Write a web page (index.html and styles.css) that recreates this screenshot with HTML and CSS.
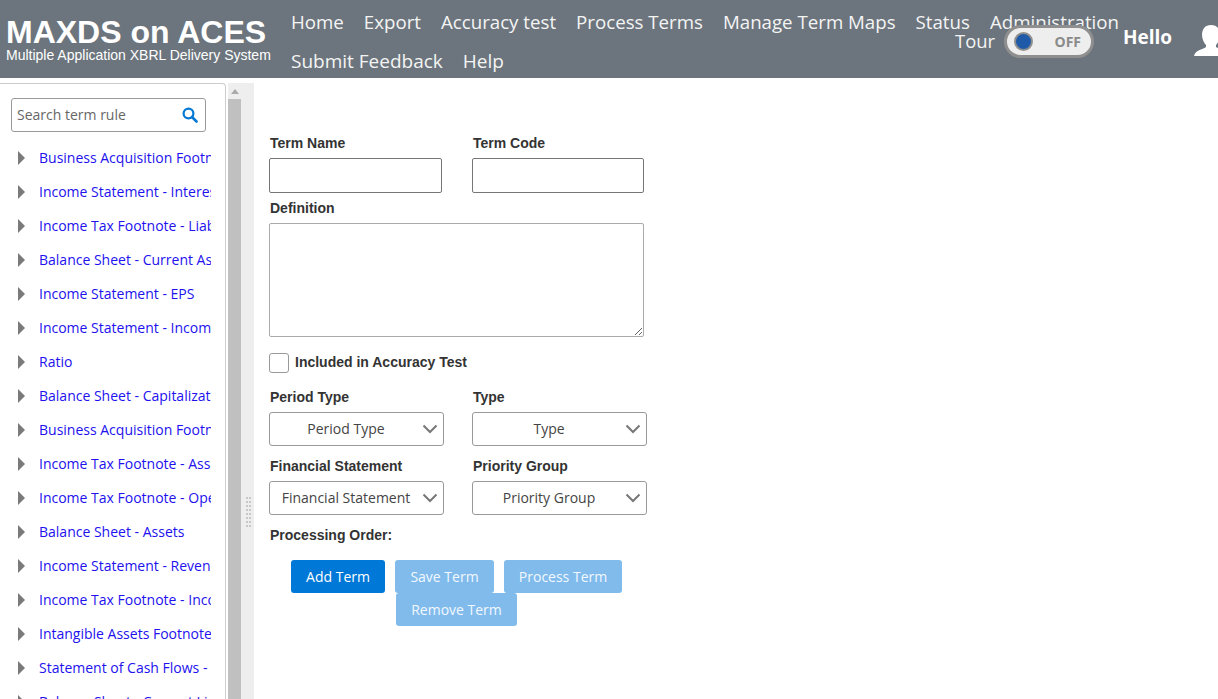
FILE: index.html
```html
<!DOCTYPE html>
<html lang="en">
<head>
  <meta charset="UTF-8">
  <title>MAXDS on ACES</title>
  <link rel="stylesheet" href="styles.css">
</head>
<body>
  <header class="topbar">
    <div class="brand">
      <div class="brand-name">MAXDS on ACES</div>
      <div class="brand-sub">Multiple Application XBRL Delivery System</div>
    </div>
    <nav class="nav">
      <a href="#">Home</a>
      <a href="#">Export</a>
      <a href="#">Accuracy test</a>
      <a href="#">Process Terms</a>
      <a href="#">Manage Term Maps</a>
      <a href="#">Status</a>
      <a href="#">Administration</a>
      <a href="#" class="nav-wide">Submit Feedback</a>
      <a href="#" class="nav-wide">Help</a>
    </nav>
    <!-- sits on top of the nav, it overlaps Administration -->
    <div class="tools">
      <span class="tour">Tour</span>
      <span class="toggle"><span class="knob"></span><span class="toggle-text">OFF</span></span>
      <span class="hello">Hello</span>
      <svg class="user-icon" width="36" height="32" viewBox="0 0 36 32">
        <path fill="#fff" d="M17 1c6 0 9 4 9 10 0 4-2 8-4 10v2c2 2 12 3 13 9H0c1-6 10-7 12-9v-2c-2-2-4-6-4-10C8 5 11 1 17 1z"/>
      </svg>
    </div>
  </header>

  <div class="layout">
    <aside class="sidebar">
      <div class="search">
        <input type="text" placeholder="Search term rule">
        <svg width="16" height="16" viewBox="0 0 16 16">
          <circle cx="6.5" cy="6.5" r="4.9" fill="none" stroke="#0078d4" stroke-width="2.2"/>
          <path d="M10 10l4.5 4.5" stroke="#0078d4" stroke-width="2.6" stroke-linecap="round"/>
        </svg>
      </div>
      <ul class="tree">
        <li><a href="#">Business Acquisition Footnote</a></li>
        <li><a href="#">Income Statement - Interest</a></li>
        <li><a href="#">Income Tax Footnote - Liabilities</a></li>
        <li><a href="#">Balance Sheet - Current Assets</a></li>
        <li><a href="#">Income Statement - EPS</a></li>
        <li><a href="#">Income Statement - Income</a></li>
        <li><a href="#">Ratio</a></li>
        <li><a href="#">Balance Sheet - Capitalization</a></li>
        <li><a href="#">Business Acquisition Footnote</a></li>
        <li><a href="#">Income Tax Footnote - Assets</a></li>
        <li><a href="#">Income Tax Footnote - Operating</a></li>
        <li><a href="#">Balance Sheet - Assets</a></li>
        <li><a href="#">Income Statement - Revenue</a></li>
        <li><a href="#">Income Tax Footnote - Income</a></li>
        <li><a href="#">Intangible Assets Footnote</a></li>
        <li><a href="#">Statement of Cash Flows - Other</a></li>
        <li><a href="#">Balance Sheet - Current Liabilities</a></li>
      </ul>
    </aside>

    <div class="splitter">
      <div class="scroll-track">
        <span class="scroll-up"></span>
        <div class="scroll-thumb"></div>
      </div>
      <div class="grip"></div>
    </div>

    <main class="editor">
      <div class="row">
        <div class="col">
          <label for="term-name">Term Name</label>
          <input type="text" id="term-name" class="field field-name">
        </div>
        <div class="col">
          <label for="term-code">Term Code</label>
          <input type="text" id="term-code" class="field field-code">
        </div>
      </div>

      <label for="definition" class="definition-label">Definition</label>
      <textarea id="definition" class="definition"></textarea>

      <div class="check-row">
        <span class="checkbox"></span>
        <label>Included in Accuracy Test</label>
      </div>

      <div class="row row-first-select">
        <div class="col">
          <label>Period Type</label>
          <div class="dropdown"><span>Period Type</span><svg width="16" height="10" viewBox="0 0 16 10"><path d="M1.5 1.5L8 8l6.5-6.5" fill="none" stroke="#777" stroke-width="2"/></svg></div>
        </div>
        <div class="col">
          <label>Type</label>
          <div class="dropdown"><span>Type</span><svg width="16" height="10" viewBox="0 0 16 10"><path d="M1.5 1.5L8 8l6.5-6.5" fill="none" stroke="#777" stroke-width="2"/></svg></div>
        </div>
      </div>

      <div class="row row-select">
        <div class="col">
          <label>Financial Statement</label>
          <div class="dropdown"><span>Financial Statement</span><svg width="16" height="10" viewBox="0 0 16 10"><path d="M1.5 1.5L8 8l6.5-6.5" fill="none" stroke="#777" stroke-width="2"/></svg></div>
        </div>
        <div class="col">
          <label>Priority Group</label>
          <div class="dropdown"><span>Priority Group</span><svg width="16" height="10" viewBox="0 0 16 10"><path d="M1.5 1.5L8 8l6.5-6.5" fill="none" stroke="#777" stroke-width="2"/></svg></div>
        </div>
      </div>

      <label class="order-label">Processing Order:</label>

      <div class="actions">
        <button class="btn btn-add">Add Term</button>
        <button class="btn btn-off btn-save">Save Term</button>
        <button class="btn btn-off btn-process">Process Term</button>
        <button class="btn btn-off btn-remove">Remove Term</button>
      </div>
    </main>
  </div>
</body>
</html>
```

FILE: styles.css
```css
html, body {
  margin: 0;
  height: 100%;
  overflow: hidden;
  background: #fff;
}
body {
  font-family: "Open Sans", sans-serif;
  font-size: 14px;
  color: #222;
}

/* top bar */
.topbar {
  position: relative;
  display: flex;
  height: 78px;
  background: #6c757d;
  overflow: hidden;
}
.brand {
  width: 281px;
  flex: none;
  padding: 16px 0 0 6px;
  box-sizing: border-box;
  font-family: "Liberation Sans", Arial, sans-serif;
  color: #fff;
}
.brand-name {
  font-size: 32px;
  font-weight: bold;
  line-height: 32px;
}
.brand-sub {
  font-size: 14px;
  line-height: 14px;
}
.nav {
  flex: 1;
  display: flex;
  flex-wrap: wrap;
  align-content: flex-start;
  row-gap: 1px;
  padding-top: 2px;
}
.nav a {
  padding: 0 10px;
  font-size: 18.7px;
  line-height: 39px;
  color: #f4f4f4;
  text-decoration: none;
}
.nav a.nav-wide {
  font-size: 19px;
}
.tools {
  position: absolute;
  left: 955px;
  top: 25px;
  display: flex;
  align-items: center;
  height: 33px;
  color: #f4f4f4;
}
.tour {
  margin-top: -2px;
  font-size: 18.4px;
  width: 49px;
}
.toggle {
  display: flex;
  align-items: center;
  justify-content: space-between;
  box-sizing: border-box;
  width: 90px;
  height: 33px;
  padding: 0 10px 0 7px;
  background: #eee;
  border: 3px solid #8f8f8f;
  border-radius: 17px;
}
.knob {
  width: 15px;
  height: 15px;
  background: #1f5aa8;
  border: 2px solid #8f8f8f;
  border-radius: 50%;
}
.toggle-text {
  font-size: 14px;
  font-weight: bold;
  color: #8a8a8a;
}
.hello {
  margin: -10px 0 0 29px;
  font-size: 19px;
  font-weight: bold;
  color: #fff;
}
.user-icon {
  margin: -3px 0 0 22px;
  flex: none;
}

/* page under the bar */
.layout {
  display: flex;
  height: 621px;
}
.sidebar {
  width: 226px;
  height: 616px;
  margin-top: 5px;
  flex: none;
  box-sizing: border-box;
  padding: 14px 14px 0 11px;
  border-top: 1px solid #ccc;
  border-right: 1px solid #ccc;
  border-top-right-radius: 4px;
  overflow: hidden;
}
.search {
  display: flex;
  align-items: center;
  box-sizing: border-box;
  width: 195px;
  height: 34px;
  padding: 0 7px 0 5px;
  border: 1px solid #999;
  border-radius: 3px;
}
.search input {
  flex: 1;
  min-width: 0;
  padding: 0 0 2px;
  border: 0;
  outline: 0;
  font: inherit;
}
.search input::placeholder {
  color: #666;
  opacity: 1;
}
.tree {
  margin: 9px 0 0;
  padding: 0;
  list-style: none;
}
.tree li {
  position: relative;
  height: 34px;
  line-height: 34px;
  padding-left: 28px;
  white-space: nowrap;
  overflow: hidden;
}
.tree li::before {
  content: "";
  position: absolute;
  left: 7px;
  top: 10px;
  border-left: 7px solid #7a7a7a;
  border-top: 7px solid transparent;
  border-bottom: 7px solid transparent;
}
.tree a {
  color: #2211ee;
  text-decoration: none;
}

.splitter {
  display: flex;
  width: 28px;
  margin-top: 5px;
  flex: none;
  background: #eee;
  border-left: 2px solid #fff;
  box-sizing: border-box;
}
.scroll-track {
  width: 13px;
  flex: none;
}
.scroll-up {
  display: block;
  width: 0;
  margin: 6px auto 5px;
  border-left: 4px solid transparent;
  border-right: 4px solid transparent;
  border-bottom: 5px solid #aaa;
}
.scroll-thumb {
  height: 600px;
  background: #c0c0c0;
}
.grip {
  width: 5px;
  height: 32px;
  margin: 414px 0 0 5px;
  background-image: radial-gradient(circle at 1px 1px, #c8c8c8 1.2px, transparent 1.3px);
  background-size: 3px 4px;
}

/* form */
.editor {
  flex: 1;
  padding: 57px 0 0 15px;
}
label {
  display: block;
  padding-left: 1px;
  font-family: "Liberation Sans", Arial, sans-serif;
  font-size: 14px;
  font-weight: bold;
  line-height: 16px;
  color: #333;
}
.row {
  display: flex;
}
.col {
  width: 203px;
}
.field {
  display: block;
  box-sizing: border-box;
  height: 35px;
  margin-top: 7px;
  border: 1px solid #767676;
  border-radius: 2px;
}
.field-name {
  width: 173px;
}
.field-code {
  width: 172px;
}
.definition-label {
  margin-top: 7px;
}
.definition {
  display: block;
  box-sizing: border-box;
  width: 375px;
  height: 114px;
  margin-top: 7px;
  border: 1px solid #aaa;
  border-radius: 2px;
}
.check-row {
  display: flex;
  align-items: center;
  margin-top: 16px;
}
.check-row label {
  padding: 0 0 2px 6px;
}
.checkbox {
  box-sizing: border-box;
  width: 20px;
  height: 20px;
  border: 1px solid #999;
  border-radius: 3px;
}
.row-first-select {
  margin-top: 16px;
}
.row-select {
  margin-top: 12px;
}
.dropdown {
  display: flex;
  align-items: center;
  box-sizing: border-box;
  width: 175px;
  height: 34px;
  margin-top: 7px;
  padding: 0 5px 0 0;
  border: 1px solid #999;
  border-radius: 3px;
  color: #444;
}
.dropdown span {
  flex: 1;
  padding-bottom: 2px;
  text-align: center;
  white-space: nowrap;
}
.order-label {
  margin-top: 12px;
}
.actions {
  display: flex;
  flex-wrap: wrap;
  justify-content: center;
  column-gap: 10px;
  width: 375px;
  margin-top: 17px;
}
.btn {
  height: 33px;
  padding: 0;
  border: 0;
  border-radius: 3px;
  background: #0078d7;
  color: #fff;
  font: inherit;
}
.btn-off {
  background: #80bbec;
  color: #f2f8fe;
}
.btn-add {
  width: 94px;
}
.btn-save {
  width: 99px;
}
.btn-process {
  width: 118px;
}
.btn-remove {
  width: 121px;
}
```
